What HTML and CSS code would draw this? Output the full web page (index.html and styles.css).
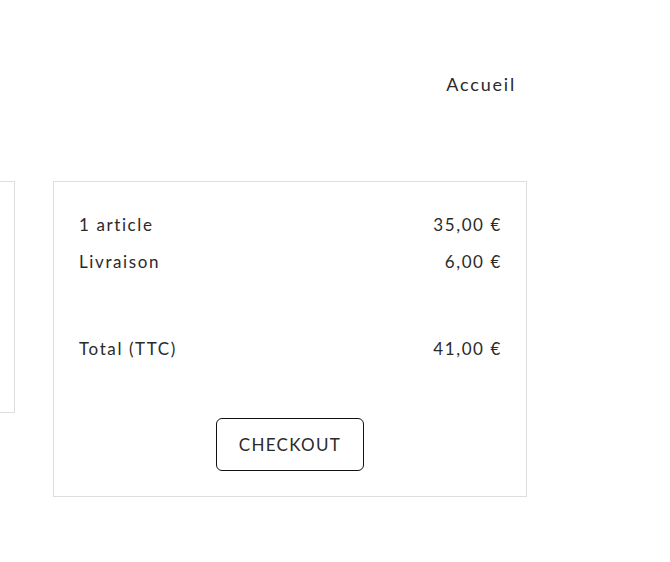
FILE: index.html
```html
<!DOCTYPE html>
<html lang="fr">
<head>
<meta charset="utf-8">
<title>Panier</title>
<link rel="stylesheet" href="styles.css">
</head>
<body>
<header class="topbar">
  <nav class="nav"><a class="nav-link" href="#">Accueil</a></nav>
</header>
<main class="cart">
  <section class="cart-items"></section>
  <section class="summary">
    <div class="row"><span>1 article</span><span>35,00 €</span></div>
    <div class="row row-second"><span>Livraison</span><span>6,00 €</span></div>
    <div class="row row-total"><span>Total (TTC)</span><span>41,00 €</span></div>
    <div class="actions"><button class="checkout">CHECKOUT</button></div>
  </section>
</main>
</body>
</html>
```
FILE: styles.css
```css
html, body {
  margin: 0;
  padding: 0;
  background: #fff;
}
body {
  font-family: "Lato", "Noto Sans", sans-serif;
  color: #222;
  width: 670px;
  overflow: hidden;
}
.topbar {
  height: 181px;
  box-sizing: border-box;
  padding-top: 72px;
  padding-right: 154px;
}
.nav {
  display: flex;
  justify-content: flex-end;
}
.nav-link {
  font-size: 18px;
  font-weight: 400;
  line-height: 24px;
  letter-spacing: 1.8px;
  color: #2a2a2a;
  text-decoration: none;
}
.cart {
  display: flex;
  align-items: flex-start;
  gap: 38px;
  margin-left: -99px;
}
.cart-items {
  width: 114px;
  height: 232px;
  box-sizing: border-box;
  border: 1px solid #ddd;
}
.summary {
  width: 474px;
  box-sizing: border-box;
  border: 1px solid #ddd;
  padding: 32px 24px 25px 25px;
}
.row {
  display: flex;
  justify-content: space-between;
  font-size: 17px;
  font-weight: 400;
  line-height: 22px;
  letter-spacing: 1.6px;
  color: #2a2a2a;
}
.row-second {
  margin-top: 15px;
}
.row-total {
  margin-top: 65px;
}
.actions {
  display: flex;
  justify-content: center;
  margin-top: 58px;
}
.checkout {
  width: 148px;
  height: 53px;
  box-sizing: border-box;
  border: 1px solid #111;
  border-radius: 6px;
  background: #fff;
  font-family: "Lato", "Noto Sans", sans-serif;
  font-size: 17px;
  font-weight: 400;
  letter-spacing: 1.3px;
  color: #2a2a2a;
  padding: 0 0 0 1px;
  margin-right: 2px;
}
```
